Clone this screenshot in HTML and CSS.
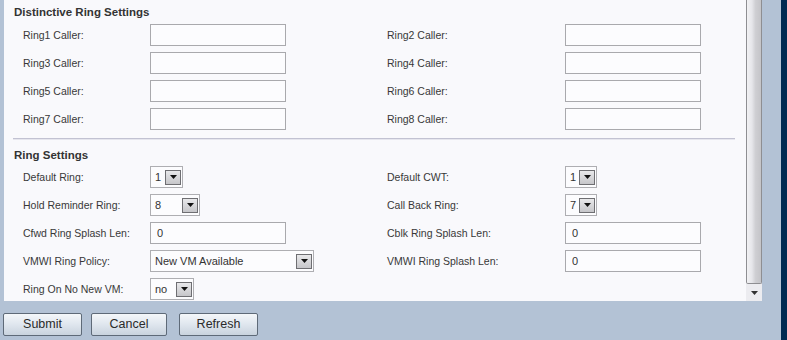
FILE: index.html
```html
<!DOCTYPE html>
<html>
<head>
<meta charset="utf-8">
<link rel="stylesheet" href="styles.css">
</head>
<body>
<div class="page">
  <div class="main">
    <div class="panel">
      <div class="content">
        <section class="sec sec-first">
          <h2 class="head">Distinctive Ring Settings</h2>
          <div class="grid">
            <label class="lbl">Ring1 Caller:</label><input class="txt" type="text" value="">
            <label class="lbl">Ring2 Caller:</label><input class="txt" type="text" value="">
            <label class="lbl">Ring3 Caller:</label><input class="txt" type="text" value="">
            <label class="lbl">Ring4 Caller:</label><input class="txt" type="text" value="">
            <label class="lbl">Ring5 Caller:</label><input class="txt" type="text" value="">
            <label class="lbl">Ring6 Caller:</label><input class="txt" type="text" value="">
            <label class="lbl">Ring7 Caller:</label><input class="txt" type="text" value="">
            <label class="lbl">Ring8 Caller:</label><input class="txt" type="text" value="">
          </div>
        </section>
        <div class="sep"></div>
        <section class="sec sec-second">
          <h2 class="head head-second">Ring Settings</h2>
          <div class="grid">
            <label class="lbl">Default Ring:</label>
            <div class="sel w33"><span class="val">1</span><span class="arr"><svg width="7" height="4" viewBox="0 0 7 4"><path d="M0 0H7L3.5 4Z" fill="#111"/></svg></span></div>
            <label class="lbl">Default CWT:</label>
            <div class="sel w32"><span class="val">1</span><span class="arr"><svg width="7" height="4" viewBox="0 0 7 4"><path d="M0 0H7L3.5 4Z" fill="#111"/></svg></span></div>

            <label class="lbl">Hold Reminder Ring:</label>
            <div class="sel w50"><span class="val">8</span><span class="arr"><svg width="7" height="4" viewBox="0 0 7 4"><path d="M0 0H7L3.5 4Z" fill="#111"/></svg></span></div>
            <label class="lbl">Call Back Ring:</label>
            <div class="sel w32"><span class="val">7</span><span class="arr"><svg width="7" height="4" viewBox="0 0 7 4"><path d="M0 0H7L3.5 4Z" fill="#111"/></svg></span></div>

            <label class="lbl">Cfwd Ring Splash Len:</label><input class="txt" type="text" value="0">
            <label class="lbl">Cblk Ring Splash Len:</label><input class="txt" type="text" value="0">

            <label class="lbl">VMWI Ring Policy:</label>
            <div class="sel w164"><span class="val">New VM Available</span><span class="arr"><svg width="7" height="4" viewBox="0 0 7 4"><path d="M0 0H7L3.5 4Z" fill="#111"/></svg></span></div>
            <label class="lbl">VMWI Ring Splash Len:</label><input class="txt" type="text" value="0">

            <label class="lbl">Ring On No New VM:</label>
            <div class="sel w44"><span class="val">no</span><span class="arr"><svg width="7" height="4" viewBox="0 0 7 4"><path d="M0 0H7L3.5 4Z" fill="#111"/></svg></span></div>
          </div>
        </section>
      </div>
      <div class="scrollbar">
        <div class="thumb"></div>
        <div class="sbtn"><svg width="7" height="4" viewBox="0 0 7 4"><path d="M0 0H7L3.5 4Z" fill="#333"/></svg></div>
      </div>
    </div>
    <div class="buttons">
      <button class="btn b-submit">Submit</button>
      <button class="btn b-cancel">Cancel</button>
      <button class="btn b-refresh">Refresh</button>
    </div>
  </div>
  <div class="navy"></div>
</div>
</body>
</html>
```

FILE: styles.css
```css
html, body {
  margin: 0;
  padding: 0;
}
body {
  background: #b3c2d5;
  font-family: "Liberation Sans", Arial, sans-serif;
  color: #333;
  width: 787px;
  height: 340px;
  overflow: hidden;
}
.page {
  display: flex;
  height: 340px;
}
.main {
  width: 781px;
  display: flex;
  flex-direction: column;
}
.navy {
  width: 6px;
  background: #002a52;
}
.panel {
  margin-left: 4px;
  width: 758px;
  height: 301px;
  background: #f9f9fc;
  display: flex;
}
.content {
  flex: 1;
  overflow: hidden;
}
.sec {
  padding-left: 19px;
}
.sec-first {
  padding-top: 4px;
  padding-bottom: 8px;
}
.sec-second {
  padding-top: 7px;
}
.head {
  margin: 0 0 4px -9px;
  font-size: 11.5px;
  font-weight: bold;
  line-height: 16px;
  color: #333;
}
.head-second {
  margin-bottom: 3px;
}
.grid {
  display: grid;
  grid-template-columns: 127px 237px 178px 136px;
  grid-auto-rows: 22px;
  row-gap: 6px;
  align-items: center;
}
.lbl {
  font-size: 10.5px;
  color: #383838;
  white-space: nowrap;
}
.txt {
  box-sizing: border-box;
  width: 136px;
  height: 22px;
  margin: 0;
  border: 1px solid #a9a9ad;
  background: #fcfcfe;
  padding: 0 0 0 6px;
  font-family: "Liberation Sans", Arial, sans-serif;
  font-size: 11px;
  color: #333;
  outline: none;
}
.sep {
  margin-left: 9px;
  width: 722px;
  height: 1px;
  background: #c2c2d2;
  border-bottom: 1px solid #e6e6ee;
}
.sel {
  box-sizing: border-box;
  height: 22px;
  border: 1px solid #aeaeb2;
  background: #fcfcfe;
  display: flex;
  align-items: center;
  padding-left: 4px;
  padding-right: 1px;
  font-size: 11px;
  color: #333;
}
.sel .val {
  flex: 1;
  white-space: nowrap;
}
.sel .arr {
  box-sizing: border-box;
  width: 16px;
  height: 15px;
  border: 1px solid #6e6e72;
  background: linear-gradient(#e8e8ea, #c6c6ca);
  display: flex;
  align-items: center;
  justify-content: center;
}
.w33 { width: 33px; }
.w32 { width: 32px; }
.w50 { width: 50px; }
.w44 { width: 44px; }
.w164 { width: 164px; }
.scrollbar {
  width: 16px;
  display: flex;
  flex-direction: column;
}
.thumb {
  flex: 1;
  box-sizing: border-box;
  border: 1px solid #8e8e92;
  border-top: none;
  border-radius: 0 0 2px 2px;
  background: linear-gradient(to right, #f2f2f4 0%, #e6e6ea 35%, #cfcfd3 60%, #c4c4c8 100%);
}
.sbtn {
  height: 17px;
  background: #ececf0;
  display: flex;
  align-items: center;
  justify-content: center;
}
.buttons {
  display: flex;
  margin-top: 12px;
  padding-left: 3px;
}
.btn {
  box-sizing: border-box;
  height: 23px;
  margin: 0;
  padding: 0 0 1px;
  border: 1px solid #5e6a78;
  border-radius: 2px;
  background: linear-gradient(#f4f7fa, #dfe6ee 50%, #c9d3de);
  font-family: "Liberation Sans", Arial, sans-serif;
  font-size: 12.5px;
  color: #2a2a2a;
}
.b-submit { width: 79px; }
.b-cancel { width: 76px; margin-left: 9px; }
.b-refresh { width: 79px; margin-left: 12px; }
```
